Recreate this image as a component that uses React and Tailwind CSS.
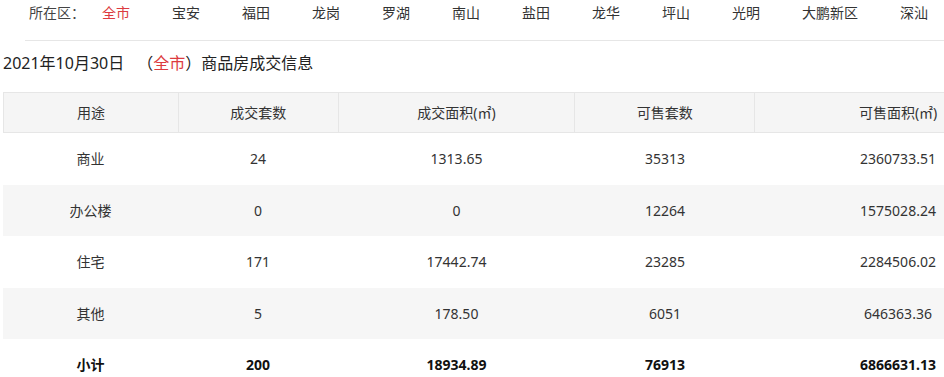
const districts = ['全市', '宝安', '福田', '龙岗', '罗湖', '南山', '盐田', '龙华', '坪山', '光明', '大鹏新区', '深汕'];

const rows = [
  ['商业', '24', '1313.65', '35313', '2360733.51'],
  ['办公楼', '0', '0', '12264', '1575028.24'],
  ['住宅', '171', '17442.74', '23285', '2284506.02'],
  ['其他', '5', '178.50', '6051', '646363.36'],
];

const total = ['小计', '200', '18934.89', '76913', '6866631.13'];

// 列宽：表格比窗口宽，右侧被截掉
const cols = ['w-[175px]', 'w-[160px]', 'w-[237px]', 'w-[180px]', 'w-[286px]'];

function App() {
  return (
    <div className="w-[944px] h-[377px] overflow-hidden bg-white text-[#333] font-['Noto_Sans','Noto_Sans_CJK_SC',sans-serif]">
      {/* 区域筛选 */}
      <div className="ml-[25px] h-[41px] border-b border-[#e6e6e6] flex items-start pt-[3px] text-[14px] leading-[20px]">
        <span className="ml-[4px] w-[73px] text-[#444]">所在区：</span>
        <div className="flex gap-[42px] whitespace-nowrap">
          {districts.map((d, i) => (
            <span key={d} className={i === 0 ? 'text-[#dc3b40]' : 'text-[#333]'}>{d}</span>
          ))}
        </div>
      </div>

      {/* 标题 */}
      <div className="h-[51px] flex items-center pl-[3px] text-[16px] text-[#222] pb-[8px]">
        <span>2021年10月30日</span>
        <span className="ml-[13px]">（<span className="text-[#dc3b40]">全市</span>）商品房成交信息</span>
      </div>

      {/* 表格 */}
      <div className="ml-[3px] w-[1038px] text-[14px]">
        <div className="flex h-[41px] bg-[#f5f5f5] border-y border-l border-[#e6e6e6]">
          {['用途', '成交套数', '成交面积(㎡)', '可售套数', '可售面积(㎡)'].map((h, i) => (
            <div key={h} className={`${cols[i]} flex items-center justify-center ${i < 4 ? 'border-r border-[#e6e6e6]' : ''}`}>
              {h}
            </div>
          ))}
        </div>
        {rows.map((r, ri) => (
          <div key={r[0]} className={`flex h-[51.5px] ${ri % 2 === 1 ? 'bg-[#f6f6f6]' : 'bg-white'}`}>
            {r.map((c, i) => (
              <div key={i} className={`${cols[i]} flex items-center justify-center`}>{c}</div>
            ))}
          </div>
        ))}
        <div className="flex h-[51.5px] bg-white font-bold text-[#111]">
          {total.map((c, i) => (
            <div key={i} className={`${cols[i]} flex items-center justify-center`}>{c}</div>
          ))}
        </div>
      </div>
    </div>
  );
}

export default App;
